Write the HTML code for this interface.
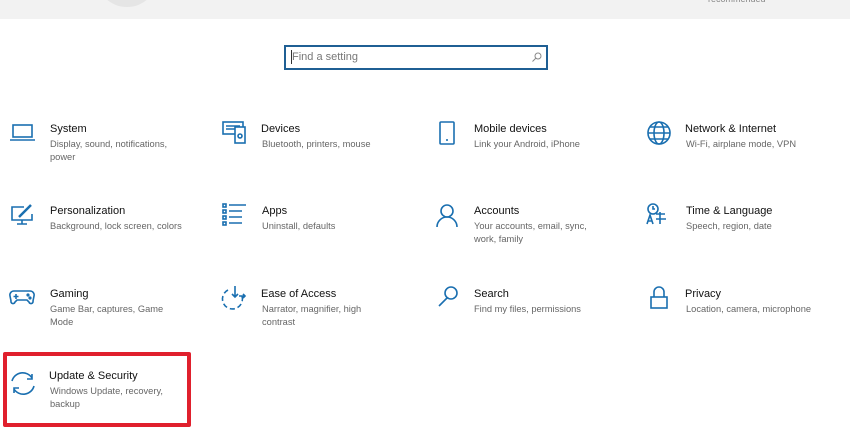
<!DOCTYPE html>
<html><head><style>
body{margin:0;width:850px;height:445px;background:#fff;font-family:"Liberation Sans",sans-serif;position:relative;overflow:hidden}
.hdr{position:absolute;left:0;top:0;width:850px;height:19px;background:#f2f2f2;overflow:hidden}
.circ{position:absolute;left:97px;top:-50px;width:60px;height:57px;border-radius:50%;background:#e5e5e5}
.rec{position:absolute;left:708px;top:-6px;font-size:9px;color:#888}
.search{position:absolute;left:284px;top:45px;width:260px;height:21px;border:2px solid #1f5f94;box-sizing:content-box}
.search span{position:absolute;left:6px;top:4px;font-size:11px;color:#777}
.search i{position:absolute;left:5px;top:3px;width:1px;height:14px;background:#333}
.t{position:absolute;font-size:11px;color:#111;white-space:nowrap}
.d{position:absolute;font-size:9.3px;color:#666;line-height:13px;width:135px}
.red{position:absolute;left:3px;top:352px;width:180px;height:67px;border:4px solid #e0202d;border-radius:2px}
</style></head><body>
<div class="hdr"><div class="circ"></div><div class="rec">recommended</div></div>
<div class="search"><i></i><span>Find a setting</span>
<svg style="position:absolute;left:245px;top:5px" width="11" height="11" viewBox="0 0 11 11"><circle cx="7" cy="4" r="3" fill="none" stroke="#888" stroke-width="1"/><path d="M5 6L1.5 9.5" stroke="#888"/></svg></div>

<div class="red"></div>

<svg width="850" height="445" style="position:absolute;left:0;top:0" fill="none" stroke="#1a6fb0" stroke-width="1.6">
<rect x="13" y="125" width="19" height="12"/><path d="M10 140h25"/>
<rect x="223" y="122" width="20" height="12"/><path d="M226 126h14M226 129h14"/><rect x="235" y="127" width="10" height="16" fill="#fff"/><circle cx="240" cy="136" r="2"/>
<rect x="440" y="122" width="14" height="22" rx="1"/><path d="M446 140h2"/>
<circle cx="659" cy="133" r="11"/><ellipse cx="659" cy="133" rx="5" ry="11"/><path d="M648 133h22M650 127h18M650 139h18"/>
<path d="M24 207h-12v13h20v-6M22 220v4M17 224h10"/><path d="M19 217l12-12" stroke-width="2.5"/>
<rect x="223" y="204" width="3" height="3"/><rect x="223" y="210" width="3" height="3"/><rect x="223" y="216" width="3" height="3"/><rect x="223" y="222" width="3" height="3"/><path d="M229 205h17M229 211h13M229 217h13M229 223h13"/>
<circle cx="447" cy="211" r="6"/><path d="M437 227a10 10 0 0 1 20 0"/>
<circle cx="653" cy="209" r="5"/><path d="M653 206v3h2"/><path d="M647 224l3-9 3 9M648 221h4M656 214h9M660 212v12M656 219h10"/>
<path d="M14 291h16a4 4 0 0 1 4 5l-1 5a2 2 0 0 1-4 1l-2-2h-10l-2 2a2 2 0 0 1-4-1l-1-5a4 4 0 0 1 4-5z"/><path d="M16 294v5M13.5 296.5h5"/><circle cx="28" cy="295" r=".8"/><circle cx="30" cy="298" r=".8"/>
<path d="M228 290a10 10 0 1 0 14 6" stroke-dasharray="5 3"/><path d="M235 286v11M232 294l3 3 3-3M239 296h6M243 294l2 2-2 2"/>
<circle cx="451" cy="293" r="6"/><path d="M447 298l-8 8"/>
<path d="M654 297v-5a5 5 0 0 1 10 0v5"/><rect x="651" y="297" width="16" height="11"/>
<path d="M12 381a11 11 0 0 1 20-3M32 374v5h-5M34 386a11 11 0 0 1-20 3M14 393v-5h5"/>
</svg>

<div class="t" style="left:50px;top:123px">System</div><div class="d" style="left:50px;top:138px">Display, sound, notifications, power</div>
<div class="t" style="left:261px;top:123px">Devices</div><div class="d" style="left:262px;top:138px">Bluetooth, printers, mouse</div>
<div class="t" style="left:474px;top:123px">Mobile devices</div><div class="d" style="left:474px;top:138px">Link your Android, iPhone</div>
<div class="t" style="left:685px;top:123px">Network &amp; Internet</div><div class="d" style="left:686px;top:138px">Wi-Fi, airplane mode, VPN</div>

<div class="t" style="left:50px;top:205px">Personalization</div><div class="d" style="left:50px;top:220px;width:145px">Background, lock screen, colors</div>
<div class="t" style="left:262px;top:205px">Apps</div><div class="d" style="left:262px;top:220px">Uninstall, defaults</div>
<div class="t" style="left:474px;top:205px">Accounts</div><div class="d" style="left:474px;top:220px;width:125px">Your accounts, email, sync, work, family</div>
<div class="t" style="left:686px;top:205px">Time &amp; Language</div><div class="d" style="left:686px;top:220px">Speech, region, date</div>

<div class="t" style="left:50px;top:288px">Gaming</div><div class="d" style="left:50px;top:303px;width:120px">Game Bar, captures, Game Mode</div>
<div class="t" style="left:261px;top:288px">Ease of Access</div><div class="d" style="left:262px;top:303px;width:120px">Narrator, magnifier, high contrast</div>
<div class="t" style="left:474px;top:288px">Search</div><div class="d" style="left:474px;top:303px">Find my files, permissions</div>
<div class="t" style="left:685px;top:288px">Privacy</div><div class="d" style="left:686px;top:303px;width:150px">Location, camera, microphone</div>

<div class="t" style="left:49px;top:370px">Update &amp; Security</div><div class="d" style="left:50px;top:385px;width:125px">Windows Update, recovery, backup</div>
</body></html>
